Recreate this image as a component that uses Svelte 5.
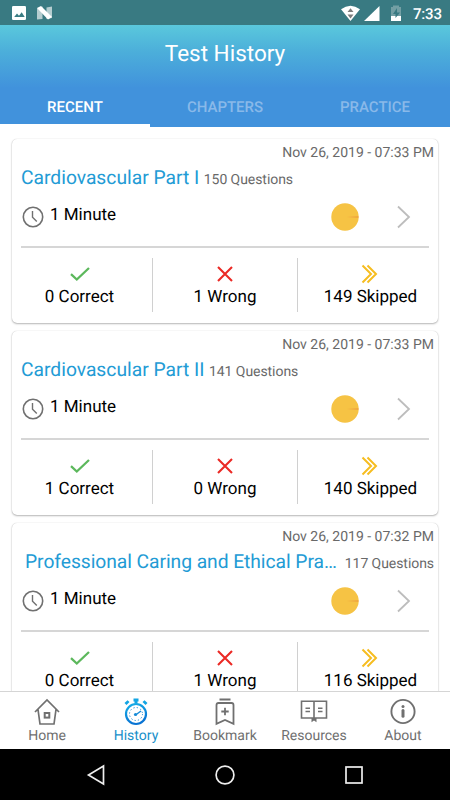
<script>
  const tests = [
    { title: 'Cardiovascular Part I', total: 150, date: 'Nov 26, 2019 - 07:33 PM', correct: 0, wrong: 1, skipped: 149 },
    { title: 'Cardiovascular Part II', total: 141, date: 'Nov 26, 2019 - 07:33 PM', correct: 1, wrong: 0, skipped: 140 },
    { title: 'Professional Caring and Ethical Pra…', long: true, total: 117, date: 'Nov 26, 2019 - 07:32 PM', correct: 0, wrong: 1, skipped: 116 }
  ];
  const tabs = ['RECENT', 'CHAPTERS', 'PRACTICE'];
</script>

<div class="screen">
  <div class="status">
    <svg class="left" width="42" height="16" viewBox="0 0 42 16">
      <rect x="0" y="1" width="14" height="14" rx="1.3" fill="#fff" />
      <path d="M2.2 12l2.8-3.6 2 2.4 2.7-3.6 3 4.8z" fill="#397c83" />
      <path d="M25 3.500l5.500-2V14L25 14.500zM34.500 2.500l5.500-1V13l-5.500 1z" fill="#b5cdd0" />
      <path d="M25 3l4-2 11 11-4 2.500z" fill="#fff" />
    </svg>
    <svg class="right" width="64" height="18" viewBox="0 0 64 18">
      <path d="M0 4.200Q9.500-2.800 19 4.200L9.500 16z" fill="#fff" />
      <path d="M6.500 7h6L9.500 3.200zM6.500 9.500h6l-3 4z" fill="#7c7c7c" />
      <path d="M23 16L38.500 1v15z" fill="#fff" />
      <path d="M50 2h2V.5h6V2h2v14H50z" fill="#739fa4" />
      <path d="M50 11h10v5H50z" fill="#fff" />
      <path d="M56 3l-4 6h2.500v4L59 7.500h-3z" fill="#397a82" />
    </svg>
    <span class="time">7:33</span>
  </div>

  <header>
    <h1>Test History</h1>
    <div class="tabs">
      {#each tabs as tab, i}
        <div class="tab" class:active={i === 0}>{tab}</div>
      {/each}
    </div>
  </header>

  <main>
    {#each tests as test}
      <article>
        <div class="date">{test.date}</div>
        <div class="heading" class:long={test.long}>
          <h2>{test.title}</h2><span class="count">{test.total} Questions</span>
        </div>
        <div class="info">
          <svg width="22" height="22" viewBox="0 0 22 22" fill="none" stroke="#707070">
            <circle cx="11" cy="11" r="9.700" stroke-width="1.600" />
            <path d="M10.500 5v6.200l4.300 4.300" stroke-width="1.400" />
          </svg>
          <span class="minute">1 Minute</span>
          <svg class="pie" width="28" height="28" viewBox="0 0 28 28">
            <circle cx="14" cy="14" r="13.700" fill="#f6c344" />
            <path d="M16 14l11.500-.4v.8z" fill="#e98b3c" />
          </svg>
          <svg class="go" width="14" height="24" viewBox="0 0 14 24">
            <path d="M1 1.500L12 12 1 22.500" fill="none" stroke="#bdbdbd" stroke-width="1.800" />
          </svg>
        </div>
        <div class="stats">
          <div class="stat">
            <svg width="24" height="20" viewBox="0 0 24 20"><path d="M3 10.200l5.800 5.300L21 4" fill="none" stroke="#5cb85c" stroke-width="2.300" /></svg>
            <span>{test.correct} Correct</span>
          </div>
          <div class="stat mid">
            <svg width="24" height="20" viewBox="0 0 24 20"><path d="M5 3l14 14M19 3L5 17" fill="none" stroke="#eb2a25" stroke-width="2.100" /></svg>
            <span>{test.wrong} Wrong</span>
          </div>
          <div class="stat">
            <svg width="24" height="20" viewBox="0 0 24 20"><path d="M3.500 1.500l8.500 8.500-8.500 8.500M8.500 1.500L17 10l-8.500 8.500" fill="none" stroke="#f6bd20" stroke-width="2" /></svg>
            <span>{test.skipped} Skipped</span>
          </div>
        </div>
      </article>
    {/each}
  </main>

  <nav>
    <div class="item">
      <svg width="28" height="28" viewBox="0 0 28 28" fill="none" stroke="#707070" stroke-width="1.700">
        <path d="M2 14L14 2l12 12M5 11.500l2 14.500h14l2-14.500" /><rect x="11.700" y="15" width="4.600" height="4.600" stroke-width="2" />
      </svg>
      <span>Home</span>
    </div>
    <div class="item on">
      <svg width="28" height="28" viewBox="0 0 28 28">
        <defs><linearGradient id="watch" x1="0" y1="0" x2=".3" y2="1"><stop offset="0" stop-color="#16afe8" /><stop offset="1" stop-color="#0873d3" /></linearGradient></defs>
        <path d="M11.500 .5h5v3H15.500v2h-3v-2h-1zM2.500 5L5.500 2.200 7.500 4 4.500 7zM25.500 5l-3-2.800L20.500 4l3 3z" fill="#12a5e4" />
        <circle cx="14" cy="16" r="10" fill="#fff" stroke="url(#watch)" stroke-width="2.200" />
        <circle cx="14" cy="16" r="6.500" fill="none" stroke="#1485d5" stroke-width="1" stroke-dasharray="1.200 2.203" />
        <path d="M13.500 17l5.500-4" stroke="#168bd8" stroke-width="1.500" />
        <circle cx="13.500" cy="16.500" r="1.600" fill="#168bd8" />
      </svg>
      <span>History</span>
    </div>
    <div class="item">
      <svg width="28" height="28" viewBox="0 0 28 28" fill="none" stroke="#707070" stroke-width="1.800">
        <path d="M8.500 1.500h11M5.500 25.800V7q0-2 2-2h13q2 0 2 2v18.800L14 22z" /><path d="M14 9.800v7.400M10.300 13.500h7.400" />
      </svg>
      <span>Bookmark</span>
    </div>
    <div class="item">
      <svg width="28" height="28" viewBox="0 0 28 28" fill="none" stroke="#707070" stroke-width="1.600">
        <path d="M1.500 3.300h25v16.700h-25zM14 3.300v16.700M5.500 10.200h4.500M5.500 13.500h4.500M18 10.200h4.500M18 13.500h4.500" />
        <path d="M11.500 20h5v4.300L14 22.500l-2.500 1.800z" fill="#707070" stroke="none" />
      </svg>
      <span>Resources</span>
    </div>
    <div class="item">
      <svg width="28" height="28" viewBox="0 0 28 28" fill="none" stroke="#707070">
        <circle cx="14" cy="13.500" r="11.600" stroke-width="1.900" /><path d="M14 12.500v5.800" stroke-width="3" stroke-linecap="round" /><circle cx="14" cy="8.500" r="1.500" fill="#707070" stroke="none" />
      </svg>
      <span>About</span>
    </div>
  </nav>

  <footer>
    <svg width="20" height="22" viewBox="0 0 20 22"><path d="M17.500 2v18L2.500 11z" /></svg>
    <svg width="22" height="22" viewBox="0 0 22 22"><circle cx="11" cy="11" r="8.900" /></svg>
    <svg width="20" height="20" viewBox="0 0 20 20"><rect x="2" y="2" width="16" height="16" /></svg>
  </footer>
</div>

<style>
  :global(body) { margin: 0; background: #fff; }
  .screen { width: 450px; height: 800px; overflow: hidden; display: flex; flex-direction: column; font-family: Roboto, "Liberation Sans", sans-serif; background: #fff; text-rendering: geometricPrecision; }
  svg { display: block; flex: none; }
  .status { box-sizing: border-box; height: 25px; flex: none; background: #397a82; display: flex; align-items: center; padding: 1px 8px 0 12px; color: #fff; }
  .right { margin-left: auto; margin-top: 1px; }
  .time { width: 29px; margin-left: 8px; margin-top: 2px; font-size: 15px; line-height: 16px; font-weight: 500; letter-spacing: -.2px; }
  header { height: 102px; flex: none; background: linear-gradient(#5ac8dc 0, #4cafda 26px, #4192dc 63px, #4192dc 100%); color: #fff; display: flex; flex-direction: column; }
  h1 { margin: 0; height: 61px; font-size: 22.500px; line-height: 58px; font-weight: 400; text-align: center; }
  .tabs { flex: 1; display: flex; }
  .tab { box-sizing: border-box; flex: 1; height: 41px; text-align: center; font-size: 15px; font-weight: 500; line-height: 42px; color: #89b9e9; border-bottom: 0 solid #fff; }
  .tab.active { color: #fff; border-bottom-width: 3px; }
  main { height: 564px; flex: none; overflow: hidden; box-sizing: border-box; padding: 12px 12px 0; display: flex; flex-direction: column; gap: 8px; }
  article { height: 184px; flex: none; border-radius: 5px; background: #fff; box-shadow: 0 1px 2px rgba(0,0,0,.28), 0 0 1px rgba(0,0,0,.22); display: flex; flex-direction: column; }
  .date { height: 26px; line-height: 28px; font-size: 14px; color: #696969; text-align: right; padding-right: 4px; }
  .heading { height: 26px; display: flex; align-items: baseline; padding: 0 4px 0 9px; white-space: nowrap; }
  h2 { margin: 0; font-size: 19.250px; line-height: 25px; font-weight: 400; color: #229bd5; }
  .count { font-size: 14px; color: #696969; margin-left: 4.500px; letter-spacing: -.06px; }
  .long { padding-left: 13px; }
  .long h2 { letter-spacing: -.05px; }
  .long .count { margin-left: auto; }
  .info { height: 57px; margin: 0 9px; display: flex; align-items: center; border-bottom: 2px solid #d6d6d6; box-sizing: border-box; padding: 0 18px 4px 1px; }
  .minute { margin-left: 6px; font-size: 17px; color: #000; line-height: 20px; margin-bottom: 4px; }
  .pie { margin-left: auto; }
  .go { margin-left: 38px; }
  .stats { display: flex; height: 75px; }
  .stat { flex: 1; margin-top: 10px; height: 54px; display: flex; flex-direction: column; align-items: center; padding: 6px 5px 0 0; box-sizing: border-box; font-size: 17px; line-height: 26px; color: #000; white-space: nowrap; }
  .stat:last-child { padding: 6px 0 0 5px; }
  .stat.mid { flex: 0 0 146px; padding: 6px 0 0; border: solid #d0d0d0; border-width: 0 1.500px; }
  nav { height: 58px; flex: none; border-top: 1px solid #d5d5d5; box-sizing: border-box; padding: 6px 2.500px 0; display: flex; }
  .item { flex: 1; display: flex; flex-direction: column; align-items: center; font-size: 14px; line-height: 20px; color: #707070; }
  .on { color: #168fca; }
  footer { height: 51px; flex: none; background: #000; display: flex; justify-content: space-between; align-items: center; padding: 0 86px; box-sizing: border-box; }
  footer path, footer circle, footer rect { fill: none; stroke: #eee; stroke-width: 1.700; }
</style>
